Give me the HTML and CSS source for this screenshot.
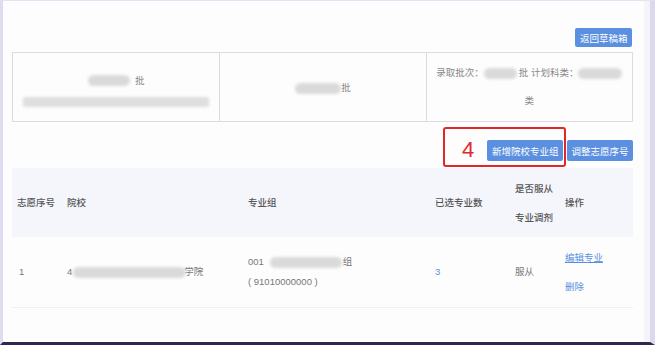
FILE: index.html
```html
<!DOCTYPE html>
<html lang="zh-CN">
<head>
  <meta charset="UTF-8" />
  <title>志愿草稿</title>
  <link rel="stylesheet" href="styles.css">
</head>
<body>
  <div class="screen">
    <div class="toolbar">
      <button class="btn">返回草稿箱</button>
    </div>

    <div class="info">
      <div class="info-cell first">
        <div class="line"><span class="blur b-batch1"></span>批</div>
        <div class="line"><span class="blur b-bar"></span></div>
      </div>
      <div class="info-cell">
        <div class="line"><span class="blur b-batch2"></span>批</div>
      </div>
      <div class="info-cell third">
        <div class="line">录取批次：<span class="blur b-short"></span>批 计划科类：<span class="blur b-type"></span></div>
        <div class="line">类</div>
      </div>
    </div>

    <div class="actions">
      <div class="mark"><span class="mark-num">4</span></div>
      <button class="btn tall">新增院校专业组</button>
      <button class="btn tall">调整志愿序号</button>
    </div>

    <table class="list">
      <colgroup>
        <col style="width:50px">
        <col style="width:181px">
        <col style="width:187px">
        <col style="width:80px">
        <col style="width:50px">
        <col style="width:73px">
      </colgroup>
      <thead>
        <tr>
          <th>志愿序号</th>
          <th>院校</th>
          <th>专业组</th>
          <th>已选专业数</th>
          <th>是否服从<br>专业调剂</th>
          <th>操作</th>
        </tr>
      </thead>
      <tbody>
        <tr>
          <td class="num">1</td>
          <td>4<span class="blur b-school"></span>学院</td>
          <td>
            <div>001<span class="blur b-group"></span>组</div>
            <div>( 91010000000 )</div>
          </td>
          <td class="link">3</td>
          <td>服从</td>
          <td class="ops">
            <div><a href="#" class="hover">编辑专业</a></div>
            <div><a href="#">删除</a></div>
          </td>
        </tr>
      </tbody>
    </table>
  </div>
</body>
</html>
```

FILE: styles.css
```css
* {
  margin: 0;
  padding: 0;
  box-sizing: border-box;
}

body {
  font-family: "Liberation Sans", "Noto Sans CJK SC", sans-serif;
  font-size: 9.5px;
  color: #777;
  background: #fff;
}

.screen {
  width: 655px;
  height: 345px;
  overflow: hidden;
  background: #fdfdfe;
  border-top: 1px solid #e4e2f3;
  border-left: 3px solid #dedcf2;
  border-right: 5px solid #dcd9ee;
  border-bottom: 3px solid #2b2851;
  box-shadow: inset -6px 0 0 #f5f5f8;
  padding: 27px 17px 0 9px;
}

.toolbar {
  display: flex;
  justify-content: flex-end;
  margin-bottom: 5px;
  padding-right: 1px;
}

.btn {
  height: 19px;
  padding: 0 4.5px;
  background: #5b8fe0;
  color: #fff;
  border: none;
  border-radius: 2px;
  font-family: inherit;
  font-size: 9.5px;
}

.btn.tall {
  height: 21px;
}

/* blurred (redacted) pieces of text */
.blur {
  display: inline-block;
  height: 11px;
  background: #dadada;
  border-radius: 6px;
  filter: blur(1.5px);
  vertical-align: middle;
}

.b-batch1 { width: 42px; margin-right: 5px; }
.b-batch2 { width: 46px; }
.b-bar { width: 186px; height: 10px; border-radius: 2px; background: #dedede; }
.b-short { width: 33px; margin-right: 2px; }
.b-type { width: 44px; }
.b-school { width: 113px; margin: 0 -2px 0 1px; position: relative; }
.b-group { width: 72px; margin: 0 1px 0 6px; }

.info {
  display: grid;
  grid-template-columns: repeat(3, 1fr);
  height: 70px;
  border: 1px solid #dcdcdc;
  color: #888;
}

.info-cell {
  display: flex;
  flex-direction: column;
  justify-content: center;
  align-items: center;
  border-left: 1px solid #dcdcdc;
}

.info-cell.first {
  border-left: none;
  padding-top: 7px;
}

.info-cell.first .line {
  line-height: 21px;
}

.info-cell.third .line {
  line-height: 28px;
}

.actions {
  position: relative;
  display: flex;
  justify-content: flex-end;
  gap: 4px;
  padding: 18px 0 7px;
}

.mark {
  position: absolute;
  top: 5px;
  right: 67px;
  width: 123px;
  height: 40px;
  border: 2px solid #e02828;
  border-radius: 3px;
  display: flex;
  align-items: center;
  padding-left: 17px;
}

.mark-num {
  font-size: 22px;
  line-height: 1;
  color: #e02a2a;
  margin-top: 5px;
}

.list {
  width: 100%;
  border-collapse: collapse;
  table-layout: fixed;
}

.list th {
  height: 69px;
  background: #f4f6fc;
  text-align: left;
  font-weight: 500;
  color: #555;
  padding-left: 5px;
  line-height: 29px;
}

.list td {
  height: 70px;
  padding-left: 5px;
  border-bottom: 1px solid #eef0f4;
  line-height: 20px;
  vertical-align: middle;
}

.list td.num {
  padding-left: 7px;
}

.list td.link {
  color: #5b8fe0;
}

.list td.ops {
  line-height: 29px;
}

.ops a {
  color: #5b8fe0;
  text-decoration: none;
}

.ops a.hover {
  text-decoration: underline;
}
```
